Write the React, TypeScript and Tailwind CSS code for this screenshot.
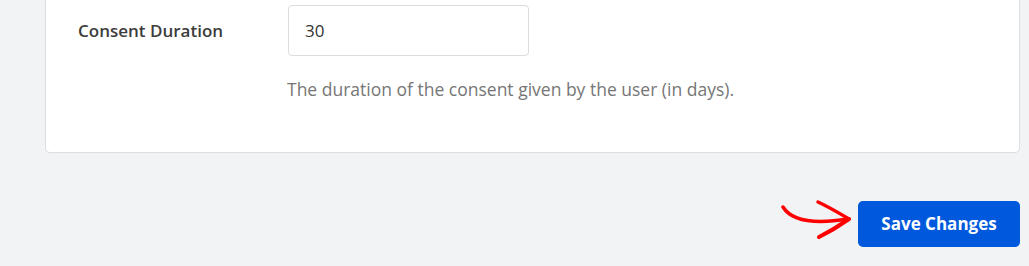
export default function App() {
  return (
    <div
      className="w-full h-[266px] overflow-hidden bg-[#f2f3f5]"
      style={{ fontFamily: '"Open Sans", "Noto Sans", sans-serif' }}
    >
      {/* Settings card (top scrolled off) */}
      <div className="ml-[45px] mr-[9px] -mt-[16px] pt-[20px] pb-[50px] pl-[32px] bg-white border border-[#dcdde0] rounded-[5px]">
        <div className="flex items-center">
          <label className="w-[210px] text-[17px] font-semibold text-[#3c3c3c]">
            Consent Duration
          </label>
          <input
            type="text"
            defaultValue="30"
            className="w-[241px] h-[51px] px-[16px] border border-[#dcdcdc] rounded-[4px] text-[17px] text-[#333] outline-none"
          />
        </div>
        <p className="ml-[209px] mt-[20px] text-[17.5px] leading-[26px] text-[#767676]">
          The duration of the consent given by the user (in days).
        </p>
      </div>

      {/* Actions */}
      <div className="flex justify-end items-start mt-[48px] mr-[9px]">
        <svg width="72" height="44" viewBox="0 0 72 44" className="mr-[5px] -mt-[3px]">
          <g fill="none" stroke="#f00" strokeLinecap="round" strokeLinejoin="round">
            <path d="M2 9 C 10 22, 30 27, 67 21" strokeWidth="3.5" />
            <path d="M37 4 C 48 9, 58 15, 68 21" strokeWidth="3.5" />
            <path d="M68 21 C 58 28, 48 34, 38 39" strokeWidth="4" />
          </g>
        </svg>
        <button className="w-[162px] h-[46px] rounded-[5px] bg-[#0059dc] text-white text-[17px] font-bold">
          Save Changes
        </button>
      </div>
    </div>
  );
}
